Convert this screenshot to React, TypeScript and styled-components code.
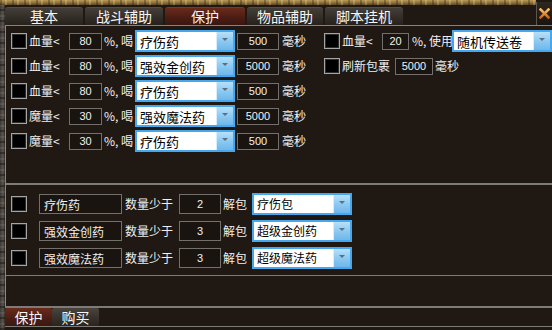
import React from 'react'
import styled, { createGlobalStyle } from 'styled-components'

const Global = createGlobalStyle`
  html, body { margin: 0; padding: 0; background: #1f1813; }
  body { font-family: "Noto Sans CJK SC", "Noto Sans", sans-serif; }
`

const Window = styled.div`
  width: 552px;
  height: 330px;
  display: flex;
  background: #1f1813;
  color: #f2f2f2;
  overflow: hidden;
`

const StoneEdge = styled.div`
  width: 5px;
  flex-shrink: 0;
  background:
    repeating-linear-gradient(0deg, rgba(0,0,0,0.35) 0 2px, transparent 2px 5px, rgba(255,255,255,0.08) 5px 7px, transparent 7px 11px),
    linear-gradient(90deg, #3c3833, #5a554e 60%, #2e2a26);
`

const Frame = styled.div`
  flex: 1;
  display: flex;
  flex-direction: column;
`

const Header = styled.div`
  height: 25px;
  display: flex;
  border-bottom: 1px solid #858380;
`

const TabArea = styled.div`
  flex: 1;
  display: flex;
  flex-direction: column;
`

const GoldStrip = styled.div`
  height: 5px;
  margin-left: -5px;
  background:
    repeating-linear-gradient(90deg, rgba(0,0,0,0.25) 0 2px, transparent 2px 5px, rgba(255,230,160,0.25) 5px 7px, transparent 7px 12px),
    linear-gradient(#b89a58, #8a6c38 60%, #5a4526);
`

const TabRow = styled.div`
  display: flex;
  gap: 2px;
  margin-top: 2px;
  height: 18px;
`

const Tab = styled.div<{ $active?: boolean; $w: number }>`
  width: ${p => p.$w}px;
  display: flex;
  align-items: center;
  justify-content: center;
  border-radius: 3px 3px 0 0;
  font-size: 14px;
  line-height: 1;
  color: #f6f6f6;
  background: ${p => p.$active
    ? 'linear-gradient(#6e2b1c, #4a1d13 60%, #3a1710)'
    : 'linear-gradient(#46403a, #332d27 60%, #28221d)'};
  box-shadow: inset 0 1px 0 rgba(255,255,255,0.08);
`

const CloseBox = styled.div`
  width: 15px;
  margin-top: 2px;
  display: flex;
  align-items: center;
  justify-content: center;
  background: linear-gradient(#2e2620, #1a1410);
  border-left: 1px solid #5c5650;
`

const Body = styled.div`
  display: flex;
  flex-direction: column;
  border-left: 1px solid #8a8884;
`

const ProtectSection = styled.div`
  height: 153px;
  padding: 4px 0 0 5px;
  display: flex;
`

const Column = styled.div<{ $w?: number }>`
  ${p => p.$w ? `width: ${p.$w}px;` : 'flex: 1;'}
  display: flex;
  flex-direction: column;
  gap: 3px;
`

const UnpackSection = styled.div`
  height: 82px;
  padding: 8px 0 0 5px;
  display: flex;
  flex-direction: column;
  gap: 5px;
`

const Divider = styled.div<{ $h: number }>`
  height: ${p => p.$h}px;
  background: #7d7b78;
`

const Spacer = styled.div`
  height: 30px;
`

const Row = styled.div`
  height: 22px;
  display: flex;
  align-items: center;
`

const Check = styled.div`
  width: 16px;
  height: 16px;
  box-sizing: border-box;
  background: #000;
  border: 1px solid #a5a5a5;
  box-shadow: inset 0 0 0 1px #2c2c2c;
  flex-shrink: 0;
`

const Label = styled.span<{ $w?: number; $ml?: number }>`
  ${p => p.$w ? `width: ${p.$w}px;` : ''}
  margin-left: ${p => p.$ml ?? 0}px;
  flex-shrink: 0;
  font-size: 12px;
  line-height: 1;
  white-space: nowrap;
  color: #f0f0f0;
`

const NumBox = styled.div<{ $w: number; $h?: number }>`
  width: ${p => p.$w}px;
  height: ${p => p.$h ?? 17}px;
  box-sizing: border-box;
  border: 1px solid #73706c;
  background: #1a1410;
  display: flex;
  align-items: center;
  justify-content: center;
  font-family: "Liberation Sans", Arial, sans-serif;
  font-size: 11px;
  color: #f2f2f2;
  flex-shrink: 0;
`

const NameBox = styled.div`
  width: 83px;
  height: 20px;
  margin-left: 12px;
  box-sizing: border-box;
  border: 1px solid #73706c;
  background: #1a1410;
  display: flex;
  align-items: center;
  padding-left: 4px;
  font-size: 12px;
  color: #f0f0f0;
  flex-shrink: 0;
`

const Select = styled.div<{ $fs: number }>`
  width: 100px;
  height: 22px;
  box-sizing: border-box;
  border: 2px solid #45a8ee;
  background: #fff;
  display: flex;
  flex-shrink: 0;
  font-size: ${p => p.$fs}px;
`

const SelectText = styled.div`
  flex: 1;
  display: flex;
  align-items: center;
  padding-left: 3px;
  color: #000;
  line-height: 1;
  white-space: nowrap;
  overflow: hidden;
`

const SelectButton = styled.div`
  width: 17px;
  margin: 0 0 0 1px;
  background: linear-gradient(#b8e0fa, #8ccaf2 50%, #6fb7ea);
  border-left: 1px solid #d8eefc;
  display: flex;
  justify-content: center;
  padding-top: 6px;
  box-sizing: border-box;
`

const Arrow = styled.div`
  width: 0;
  height: 0;
  border-left: 3px solid transparent;
  border-right: 3px solid transparent;
  border-top: 3px solid #5d6e80;
`

const BottomTabs = styled.div`
  height: 18px;
  display: flex;
  border-bottom: 1px solid #7d7b78;
`

const BottomTab = styled.div<{ $active?: boolean }>`
  width: 47px;
  display: flex;
  align-items: center;
  justify-content: center;
  font-size: 14px;
  line-height: 1;
  color: #f6f6f6;
  border-radius: 2px 2px 0 0;
  background: ${p => p.$active
    ? 'linear-gradient(#6a2a1c, #4a1d13 60%, #3a1810)'
    : 'linear-gradient(#4a443e, #36302a 60%, #2a241f)'};
`

type Potion = { stat: string; pct: string; item: string; ms: string }

const potions: Potion[] = [
  { stat: '血量<', pct: '80', item: '疗伤药', ms: '500' },
  { stat: '血量<', pct: '80', item: '强效金创药', ms: '5000' },
  { stat: '血量<', pct: '80', item: '疗伤药', ms: '500' },
  { stat: '魔量<', pct: '30', item: '强效魔法药', ms: '5000' },
  { stat: '魔量<', pct: '30', item: '疗伤药', ms: '500' },
]

const unpacks = [
  { name: '疗伤药', count: '2', pack: '疗伤包' },
  { name: '强效金创药', count: '3', pack: '超级金创药' },
  { name: '强效魔法药', count: '3', pack: '超级魔法药' },
]

const Dropdown: React.FC<{ text: string; fs: number }> = ({ text, fs }) => (
  <Select $fs={fs}>
    <SelectText>{text}</SelectText>
    <SelectButton><Arrow /></SelectButton>
  </Select>
)

const App: React.FC = () => {
  return (
    <Window>
      <Global />
      <StoneEdge />
      <Frame>
        <Header>
          <TabArea>
            <GoldStrip />
            <TabRow>
              <Tab $w={78}>基本</Tab>
              <Tab $w={78}>战斗辅助</Tab>
              <Tab $w={80} $active>保护</Tab>
              <Tab $w={76}>物品辅助</Tab>
              <Tab $w={78}>脚本挂机</Tab>
            </TabRow>
          </TabArea>
          <CloseBox>
            <svg width="11" height="11" viewBox="0 0 11 11">
              <defs>
                <linearGradient id="xg" x1="0" y1="0" x2="0" y2="1">
                  <stop offset="0" stopColor="#f6c06a" />
                  <stop offset="1" stopColor="#c8641c" />
                </linearGradient>
              </defs>
              <path d="M1.5 1.5 L9.5 9.5 M9.5 1.5 L1.5 9.5" stroke="url(#xg)" strokeWidth="2.6" strokeLinecap="square" />
            </svg>
          </CloseBox>
        </Header>
        <Body>
          <ProtectSection>
            <Column $w={313}>
              {potions.map((p, i) => (
                <Row key={i}>
                  <Check />
                  <Label $w={40} $ml={2}>{p.stat}</Label>
                  <NumBox $w={33}>{p.pct}</NumBox>
                  <Label $w={31} $ml={2}>%, 喝</Label>
                  <Dropdown text={p.item} fs={13} />
                  <Label $ml={2} />
                  <NumBox $w={42}>{p.ms}</NumBox>
                  <Label $ml={3}>毫秒</Label>
                </Row>
              ))}
            </Column>
            <Column>
              <Row>
                <Check />
                <Label $w={40} $ml={2}>血量&lt;</Label>
                <NumBox $w={27}>20</NumBox>
                <Label $w={40} $ml={3}>%, 使用</Label>
                <Dropdown text="随机传送卷" fs={13} />
              </Row>
              <Row>
                <Check />
                <Label $w={53} $ml={2}>刷新包裹</Label>
                <NumBox $w={38}>5000</NumBox>
                <Label $ml={2}>毫秒</Label>
              </Row>
            </Column>
          </ProtectSection>
          <Divider $h={2} />
          <UnpackSection>
            {unpacks.map((u, i) => (
              <Row key={i}>
                <Check />
                <NameBox>{u.name}</NameBox>
                <Label $w={54} $ml={3}>数量少于</Label>
                <NumBox $w={42} $h={20}>{u.count}</NumBox>
                <Label $w={29} $ml={2}>解包</Label>
                <Dropdown text={u.pack} fs={12} />
              </Row>
            ))}
          </UnpackSection>
          <Divider $h={1} />
          <Spacer />
        </Body>
        <Divider $h={2} />
        <BottomTabs>
          <BottomTab $active>保护</BottomTab>
          <BottomTab>购买</BottomTab>
        </BottomTabs>
      </Frame>
    </Window>
  )
}

export default App
